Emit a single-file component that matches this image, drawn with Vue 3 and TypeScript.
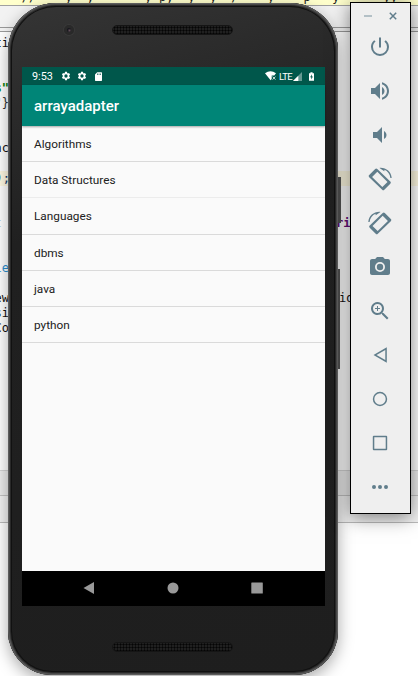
<script setup lang="ts">
interface CodeRow {
  left?: string
  right?: string
  tone?: string
  current?: boolean
}

const topicList: string[] = ['Algorithms', 'Data Structures', 'Languages', 'dbms', 'java', 'python']

const codeByRow: Record<number, CodeRow> = {
  0: { left: 'ti' },
  3: { left: 's"', tone: 'string' },
  4: { left: '"}', tone: 'close' },
  7: { left: 'nc' },
  9: { left: ');', current: true },
  12: { left: 't ', right: 'ri', tone: 'field' },
  15: { left: 'ie', tone: 'link' },
  17: { left: 'ew', right: 'id' },
  18: { left: 'si' },
  19: { left: 'Co' },
}
const codeRows: CodeRow[] = Array.from({ length: 29 }, (_, i) => codeByRow[i] ?? {})

const rotate =
  'M7.200 2.100 1.200 8.100c-.7.7-.7 1.400 0 2.100L14.200 22.700c.7.7 1.400.7 2.100 0l6-6c.7-.7.7-1.400 0-2.100L9.300 2.100c-.7-.7-1.400-.7-2.100 0zM9.300 4.700 19.500 14.900 14.300 20.100 4.100 9.900zM11.500.9 16.300 4.200 16.500 2.700C19.700 4 22 7.200 22.400 11h1.300C23.200 4.700 18 .4 11.500.9z'

const controls: { name: string; d: string; flip?: boolean }[] = [
  { name: 'Power', d: 'M13 2.500h-2v10h2zm4.830 2.670-1.420 1.420A6.920 6.920 0 0 1 19 12a7 7 0 0 1-14 0c0-2.190 1.010-4.140 2.580-5.420L6.170 5.170A8.930 8.930 0 0 0 3 12a9 9 0 0 0 18 0c0-2.740-1.230-5.180-3.170-6.830z' },
  { name: 'Volume up', d: 'M3 9v6h4l5 5V4L7 9H3zm13.500 3c0-1.770-1.020-3.290-2.500-4.030v8.050c1.480-.73 2.500-2.250 2.500-4.020zM14 3.230v2.060c2.890.86 5 3.540 5 6.710s-2.110 5.850-5 6.710v2.060c4.010-.91 7-4.490 7-8.770s-2.990-7.860-7-8.770z' },
  { name: 'Volume down', d: 'M18.500 12c0-1.770-1.020-3.290-2.500-4.030v8.050c1.480-.73 2.500-2.250 2.500-4.020zM5 9v6h4l5 5V4L9 9H5z' },
  { name: 'Rotate left', d: rotate },
  { name: 'Rotate right', d: rotate, flip: true },
  { name: 'Take screenshot', d: 'M9 2 7.170 4H4c-1.100 0-2 .9-2 2v12c0 1.100.9 2 2 2h16c1.100 0 2-.9 2-2V6c0-1.100-.9-2-2-2h-3.170L15 2zm3 15a5 5 0 1 1 0-10 5 5 0 0 1 0 10zm0-1.800a3.200 3.200 0 1 0 0-6.400 3.200 3.200 0 0 0 0 6.400z' },
  { name: 'Zoom', d: 'M15.500 14h-.79l-.28-.27A6.500 6.500 0 1 0 13.730 14.430l.27.28v.79l5 4.990L20.490 19zm-6 0a4.500 4.500 0 1 1 0-9 4.500 4.500 0 0 1 0 9zM12 10h-2v2H9v-2H7V9h2V7h1v2h2z' },
  { name: 'Back', d: 'M18.800 4.300v15.400L5.500 12zM17.300 6.900 8.500 12l8.800 5.100z' },
  { name: 'Home', d: 'M12 4.800a7.200 7.200 0 1 0 0 14.400 7.200 7.200 0 0 0 0-14.400zm0 1.500a5.700 5.700 0 1 1 0 11.400 5.700 5.700 0 0 1 0-11.400z' },
  { name: 'Overview', d: 'M5.800 4.800h12.400q1 0 1 1v12.400q0 1-1 1H5.800q-1 0-1-1V5.800q0-1 1-1zm.5 1.500v11.400h11.400V6.300z' },
  { name: 'More', d: 'M6 10a2 2 0 1 0 0 4 2 2 0 0 0 0-4zm6 0a2 2 0 1 0 0 4 2 2 0 0 0 0-4zm6 0a2 2 0 1 0 0 4 2 2 0 0 0 0-4z' },
]

const gear =
  'M19.430 12.980c.04-.32.07-.64.07-.98s-.03-.66-.07-.98l2.110-1.650c.19-.15.24-.42.12-.64l-2-3.460c-.12-.22-.39-.3-.61-.22l-2.490 1c-.52-.4-1.080-.73-1.690-.98l-.38-2.650A.49.49 0 0 0 14 2h-4c-.25 0-.46.18-.49.42l-.38 2.650c-.61.25-1.170.59-1.690.98l-2.490-1c-.23-.09-.49 0-.61.22l-2 3.460c-.13.22-.07.49.12.64l2.110 1.650c-.04.32-.07.65-.07.98s.03.66.07.98l-2.110 1.650c-.19.15-.24.42-.12.64l2 3.460c.12.22.39.3.61.22l2.490-1c.52.4 1.080.73 1.690.98l.38 2.650c.03.24.24.42.49.42h4c.25 0 .46-.18.49-.42l.38-2.650c.61-.25 1.170-.59 1.690-.98l2.490 1c.23.09.49 0 .61-.22l2-3.460c.12-.22.07-.49-.12-.64zM12 16a4 4 0 1 1 0-8 4 4 0 0 1 0 8z'
</script>

<template>
  <div class="desktop">
    <div class="editor">
      <div class="banner"><pre>   //    y  ,       y p,  y  y  /    y    p   y      yy</pre></div>
      <div class="tabs"></div>
      <div class="gap"></div>
      <div class="code">
        <div v-for="(row, i) in codeRows" :key="i" class="code-row" :class="[row.tone, { current: row.current }]">
          <span class="left">{{ row.left }}</span>
          <span class="right">{{ row.right }}</span>
        </div>
      </div>
      <div class="dock"></div>
      <div class="footer"></div>
    </div>

    <div class="side-keys"><i class="key-power"></i><i class="key-volume"></i></div>

    <div class="phone">
      <div class="bezel top">
        <span class="camera"></span>
        <span class="speaker"></span>
      </div>
      <div class="screen">
        <div class="status">
          <span class="clock">9:53</span>
          <svg class="gear" viewBox="0 0 24 24"><path :d="gear" /></svg>
          <svg class="gear" viewBox="0 0 24 24"><path :d="gear" /></svg>
          <svg class="card" viewBox="0 0 8 10"><path fill-rule="evenodd" d="M2.500 0H7.300Q8 0 8 .7V9.300Q8 10 7.300 10H.7Q0 10 0 9.300V2.700zM2.500 1.700v1.600h.8V1.700zM4.200 1.700v1.600H5V1.700zM5.900 1.700v1.600h.8V1.700z" /></svg>
          <span class="spacer"></span>
          <svg class="wifi" viewBox="0 0 12 10"><path d="M0 2.200Q5.500-1.600 11 2.200L9.300 4.400H6.700V8L5.600 9.200z" /><path class="line" d="m7.600 5.600 2.800 3m0-3-2.800 3" /></svg>
          <span class="lte">LTE</span>
          <svg class="signal" viewBox="0 0 9 9"><path class="dim" d="M0 9 9 0v9z" /><path d="M0 9l5.300-5.300V9z" /></svg>
          <svg class="battery" viewBox="0 0 6 10"><path fill-rule="evenodd" d="M1.700 0h2.600v1H6v9H0V1h1.700zM3.400 2.400 1.400 6h1.300v2.600L4.700 5H3.400z" /></svg>
        </div>
        <div class="appbar">arrayadapter</div>
        <ul class="list">
          <li v-for="topic in topicList" :key="topic">{{ topic }}</li>
        </ul>
        <div class="nav">
          <svg viewBox="0 0 12 12"><path d="M11 0v12L.5 6z" /></svg>
          <svg viewBox="0 0 12 12"><circle cx="6" cy="6" r="5.500" /></svg>
          <svg viewBox="0 0 12 12"><rect x=".3" y=".5" width="11.500" height="11" rx=".5" /></svg>
        </div>
      </div>
      <div class="bezel bottom"><span class="speaker"></span></div>
    </div>

    <div class="toolbar">
      <div class="window-buttons">
        <svg viewBox="0 0 8 8"><path class="minimise" d="M0 4h8" /></svg>
        <svg viewBox="0 0 8 8"><path d="m.8.8 6.400 6.400m0-6.400L.8 7.200" /></svg>
      </div>
      <button v-for="c in controls" :key="c.name" :aria-label="c.name">
        <svg viewBox="0 0 24 24" :class="{ flip: c.flip }"><path fill-rule="evenodd" :d="c.d" /></svg>
      </button>
    </div>
  </div>
</template>

<style>
body {
  overflow: hidden;
  background: #fff;
}
</style>

<style scoped>
.desktop {
  position: relative;
  width: 418px;
  height: 676px;
  overflow: hidden;
  background: #fff;
  font-family: Roboto, sans-serif;
}
.editor {
  display: flex;
  flex-direction: column;
}
.banner {
  box-sizing: border-box;
  height: 6px;
  overflow: hidden;
  background: #ffffcc;
  border-bottom: 1px solid #a0a0a0;
}
.banner pre {
  margin: -10px 0 0;
  font: 12px/15px "DejaVu Sans Mono", monospace;
  color: #222;
}
.tabs {
  box-sizing: border-box;
  height: 22px;
  background: #f2f2f2;
  border-bottom: 1px solid #999;
}
.gap {
  box-sizing: border-box;
  height: 4px;
  background: #f2f2f2;
  border-bottom: 1px solid #999;
}
.code {
  box-sizing: border-box;
  height: 438px;
  padding-top: 4px;
  background: #fff;
  overflow: hidden;
  font: 12px/15px "DejaVu Sans Mono", monospace;
  color: #111;
}
.code-row {
  display: flex;
  height: 15px;
  white-space: pre;
}
.code-row.current {
  background: #fffae3;
}
.left {
  display: flex;
  justify-content: flex-end;
  width: 9px;
}
.current .left {
  width: 10px;
  color: #113a70;
}
.right {
  margin-left: 330px;
}
.string .left {
  color: #008000;
  font-weight: bold;
}
.close .left {
  color: #333;
}
.field .left {
  color: #b5ccd8;
}
.field .right {
  margin-left: 327px;
  color: #660e7a;
  font-weight: bold;
}
.link .left {
  color: #2a8fd0;
}
.dock {
  box-sizing: border-box;
  height: 26px;
  background: #ececec;
  border-top: 1px solid #d3d3d3;
  border-bottom: 1px solid #c3c3c3;
}
.footer {
  box-sizing: border-box;
  height: 27px;
  background: #f2f2f2;
  border-bottom: 1px solid #bbb;
}
.side-keys {
  position: absolute;
  left: 336px;
  top: 177px;
  display: flex;
  flex-direction: column;
  gap: 46px;
}
.side-keys i {
  background: #555;
}
.key-power {
  width: 5px;
  height: 46px;
}
.key-volume {
  width: 4px;
  height: 100px;
}
.phone {
  position: absolute;
  left: 8px;
  top: 3px;
  box-sizing: border-box;
  width: 330px;
  height: 672px;
  padding: 0 13px 0 14px;
  border-radius: 48px 48px 44px 44px;
  background: linear-gradient(165deg, #353535 0, #2b2b2b 14%, #202020 32%, #1e1e1e 100%);
  box-shadow:
    inset 0 0 0 1px #5d5d5d,
    inset 0 0 0 2px #474747,
    inset 0 0 0 3px #292929,
    inset 0 0 0 4px #111,
    0 5px 16px rgba(0, 0, 0, 0.35);
}
.bezel {
  display: flex;
  box-sizing: border-box;
}
.bezel.top {
  height: 64px;
  padding: 22px 0 0 42px;
}
.bezel.bottom {
  justify-content: center;
  padding: 36px 3px 0 0;
}
.camera {
  box-sizing: border-box;
  width: 10px;
  height: 10px;
  border: 3px solid #292929;
  border-radius: 50%;
  background: radial-gradient(circle at 65% 65%, #65515b, #15151c 60%);
  box-shadow: 0 0 0 1px #393939;
}
.speaker {
  box-sizing: border-box;
  width: 121px;
  height: 10px;
  border: 1px solid #151515;
  border-radius: 5px;
  background: radial-gradient(circle, #050505 0.8px, #202020 1.3px) 0 0 / 3px 3px;
}
.top .speaker {
  margin-left: 38px;
}
.screen {
  display: flex;
  flex-direction: column;
  height: 539px;
  background: #fafafa;
}
.status {
  display: flex;
  align-items: center;
  box-sizing: border-box;
  height: 18px;
  padding: 0 10px;
  background: #00574b;
  color: #fff;
  font-size: 10.800px;
}
.status svg {
  flex: none;
  fill: #fff;
}
.clock {
  width: 29px;
}
.gear {
  width: 10px;
  height: 10px;
  margin-right: 6px;
}
.card {
  width: 7px;
  height: 9px;
  margin-left: 2px;
}
.spacer {
  flex: 1;
}
.wifi {
  width: 12px;
  height: 10px;
}
.wifi .line {
  fill: none;
  stroke: #fff;
  stroke-width: 0.8;
}
.lte {
  width: 14px;
  margin-left: 2px;
  font-size: 9.500px;
  letter-spacing: -0.6px;
}
.signal {
  width: 9px;
  height: 9px;
}
.signal .dim {
  opacity: 0.4;
}
.battery {
  width: 5px;
  height: 9px;
  margin: 0 1px 0 7px;
}
.appbar {
  height: 41px;
  padding-left: 12px;
  background: #008577;
  color: #fff;
  font-size: 15px;
  font-weight: 500;
  line-height: 43px;
  box-shadow: 0 1px 2px rgba(0, 0, 0, 0.35);
}
.list {
  flex: 1;
  margin: 0;
  padding: 0;
  list-style: none;
}
.list li {
  box-sizing: border-box;
  height: 36.200px;
  padding-left: 12px;
  border-bottom: 1px solid #dadada;
  color: #212121;
  font-size: 11.800px;
  line-height: 37px;
}
.list li:nth-child(2) {
  border-bottom-color: #ececec;
}
.nav {
  display: flex;
  justify-content: center;
  align-items: center;
  gap: 72px;
  box-sizing: border-box;
  height: 35px;
  padding: 0 2px 2px 0;
  background: #000;
}
.nav svg {
  width: 12px;
  height: 12px;
  fill: #999;
}
.toolbar {
  position: absolute;
  left: 350px;
  top: 2px;
  display: flex;
  flex-direction: column;
  align-items: center;
  box-sizing: border-box;
  width: 61px;
  height: 512px;
  padding-right: 1px;
  border: 1px solid #000;
  background: #efefef;
  box-shadow: 0 3px 18px rgba(0, 0, 0, 0.5);
}
.window-buttons {
  display: flex;
  justify-content: center;
  gap: 17px;
  height: 22px;
  padding: 9px 0 0 1px;
  box-sizing: border-box;
}
.window-buttons svg {
  width: 8px;
  height: 8px;
  fill: none;
  stroke: #607d8b;
  stroke-width: 1.5;
}
.window-buttons .minimise {
  stroke: #9fb1b9;
}
.toolbar button {
  display: flex;
  align-items: center;
  justify-content: center;
  width: 44px;
  height: 44px;
  padding: 0;
  border: 0;
  background: none;
}
.toolbar button svg {
  width: 24px;
  height: 24px;
  fill: #607d8b;
}
.toolbar button svg.flip {
  transform: scaleX(-1);
}
</style>
